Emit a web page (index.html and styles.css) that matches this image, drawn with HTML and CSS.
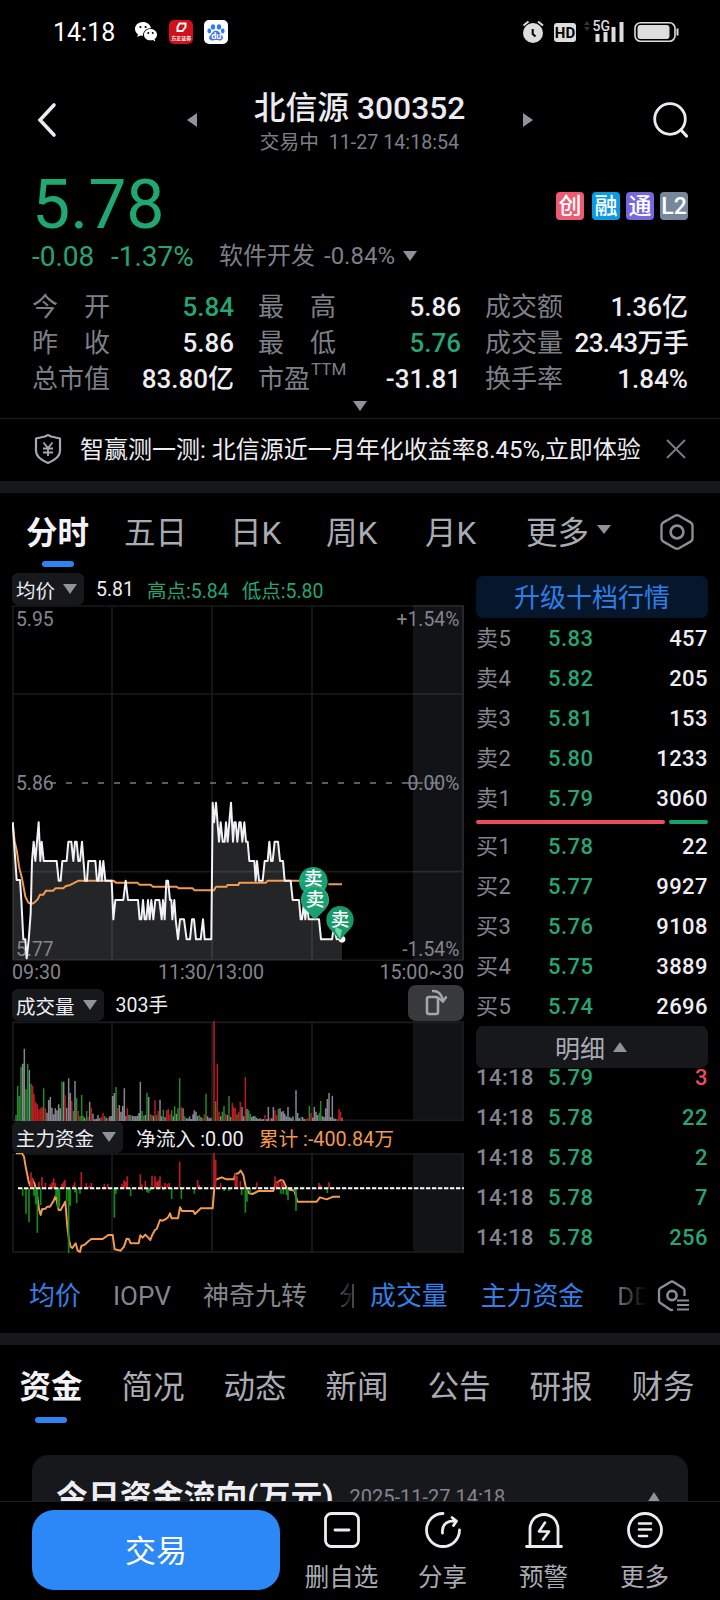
FILE: index.html
```html
<!DOCTYPE html>
<html lang="zh-CN">
<head>
<meta charset="utf-8">
<title>北信源 300352</title>
<link rel="stylesheet" href="styles.css">
</head>
<body>
<div class="phone">
  <div class="scroll">
    <div class="status">
      <span class="clock">14:18</span>
      <svg class="wechat" width="24" height="22" viewBox="0 0 24 22"><path fill="#fff" d="M9 1C4.300 1 1 4 1 8c0 2.300 1.200 4 3 5.300L3.300 16l3-1.600c.9.200 1.700.3 2.700.3 0-5 3.500-7.500 8-7.500C16.300 3.500 13 1 9 1z"/><path fill="#fff" d="M16.500 8C12.800 8 10 10.500 10 13.700s2.800 5.600 6.500 5.600c.8 0 1.500-.1 2.200-.3l2.600 1.500-.7-2.400c1.500-1 2.400-2.600 2.400-4.400C23 10.500 20.200 8 16.500 8z"/><g fill="#000"><circle cx="6.400" cy="6" r="1.100"/><circle cx="11.600" cy="6" r="1.100"/><circle cx="14.300" cy="12" r="1"/><circle cx="18.700" cy="12" r="1"/></g></svg>
      <span class="app app-red"><svg width="12" height="12" viewBox="0 0 12 12"><path d="M4.500 1.500h6v3.500l-3 4h-5V5z" fill="none" stroke="#fff" stroke-width="2"/></svg><b>方正证券</b></span>
      <span class="app app-paw"><svg width="24" height="24" viewBox="0 0 24 24"><g fill="#2f7df0"><ellipse cx="9" cy="7" rx="2.200" ry="2.800"/><ellipse cx="15" cy="7" rx="2.200" ry="2.800"/><ellipse cx="5.300" cy="11" rx="1.900" ry="2.400"/><ellipse cx="18.700" cy="11" rx="1.900" ry="2.400"/></g><path fill="#4a72ea" d="M12 10.500c2.500 0 4 3 6 5 2 2.500.5 5-2.500 5-1.500 0-2.200-.4-3.500-.4s-2 .4-3.500.4c-3 0-4.500-2.500-2.500-5 2-2 3.500-5 6-5z"/></svg><b>du</b></span>
      <span class="grow"></span>
      <svg width="160" height="34" viewBox="520 15 160 34" class="sys">
        <g fill="none" stroke="#ddd" stroke-width="2"><path d="M523.500 25.500l5-4M543 25.500l-5-4"/></g>
        <circle cx="533" cy="33" r="10" fill="#ddd"/><path d="M532.700 29v5l2.800 2.500" fill="none" stroke="#000" stroke-width="2"/>
        <rect x="554" y="23" width="22" height="19" rx="3" fill="#ddd"/><text x="565" y="38" class="hd">HD</text>
        <path d="M584 25l3-4 3 4zM584 27l3 4 3-4z" fill="#333"/>
        <text x="592.500" y="31" class="g5">5G</text>
        <g fill="#ddd"><rect x="595.500" y="34" width="4" height="8"/><rect x="603.500" y="32" width="4" height="10"/><rect x="611.500" y="27" width="4" height="15"/><rect x="619.500" y="22" width="4" height="20"/></g>
        <rect x="635" y="22.800" width="40" height="18.500" rx="5.500" fill="none" stroke="#ddd" stroke-width="1.600"/><rect x="637.500" y="25" width="32" height="14" rx="3" fill="#ddd"/><path d="M677.500 28.500v7" stroke="#ddd" stroke-width="2"/>
      </svg>
    </div>

    <div class="header">
      <svg width="22" height="36" viewBox="0 0 22 36"><path d="M18 3L4 18l14 15" fill="none" stroke="#ebebf2" stroke-width="3.600" stroke-linecap="round"/></svg>
      <svg class="prev" width="10" height="14"><path d="M10 0v14L0 7z" fill="#8f919c"/></svg>
      <div class="title"><h1>北信源 300352</h1><p>交易中&nbsp; 11-27 14:18:54</p></div>
      <svg class="next" width="10" height="14"><path d="M0 0v14l10-7z" fill="#8f919c"/></svg>
      <svg class="search" width="38" height="38" viewBox="0 0 38 38"><circle cx="18" cy="18" r="15.300" fill="none" stroke="#ebebf2" stroke-width="2.800"/><path d="M29 29l5.500 6" stroke="#ebebf2" stroke-width="3.200" stroke-linecap="round"/></svg>
    </div>

    <div class="quote">
      <div class="price">5.78</div>
      <div class="badges"><i class="b1">创</i><i class="b2">融</i><i class="b3">通</i><i class="b4">L2</i></div>
    </div>
    <div class="change"><span class="up1">-0.08</span><span class="up2">-1.37%</span><span class="sector">软件开发</span><span class="sector2">-0.84%</span><svg width="14" height="10"><path d="M0 0h14L7 10z" fill="#8f919c"/></svg></div>
    <div class="stats">
      <div><label>今<s></s>开</label><b class="g">5.84</b></div><div><label>最<s></s>高</label><b>5.86</b></div><div><label>成交额</label><b>1.36亿</b></div>
      <div><label>昨<s></s>收</label><b>5.86</b></div><div><label>最<s></s>低</label><b class="g">5.76</b></div><div><label>成交量</label><b class="fit">23.43万手</b></div>
      <div><label>总市值</label><b>83.80亿</b></div><div><label>市盈<sup>TTM</sup></label><b>-31.81</b></div><div><label>换手率</label><b>1.84%</b></div>
    </div>
    <div class="expand"><svg width="14" height="10"><path d="M0 0h14L7 10z" fill="#8f919c"/></svg></div>
    <div class="notice">
      <svg width="30" height="32" viewBox="0 0 30 32"><path d="M15 2l3 1.500 9 2V18c0 6-6 9.500-12 12C9 27.500 3 24 3 18V5.500l9-2z" fill="none" stroke="#a6a8b0" stroke-width="2.200" stroke-linejoin="round"/><path d="M10.500 9.500l4.500 5.500 4.500-5.500M15 15v8M10 15.500h10M10 19.500h10" fill="none" stroke="#a6a8b0" stroke-width="1.800"/></svg>
      <span>智赢测一测: 北信源近一月年化收益率8.45%,立即体验</span>
      <svg width="20" height="20" viewBox="0 0 20 20"><path d="M1 1l18 18M19 1L1 19" stroke="#777983" stroke-width="2"/></svg>
    </div>
    <div class="band"></div>

    <nav class="periods">
      <span class="on">分时</span><span>五日</span><span>日K</span><span>周K</span><span>月K</span><span>更多<svg width="14" height="10"><path d="M0 0h14L7 9z" fill="#8f919c"/></svg></span>
      <svg class="gear" width="36" height="38" viewBox="0 0 36 38"><path d="M16 2.800q2-1.200 4 0l11.500 6.600q2 1.200 2 3.200v12.800q0 2-2 3.200L20 35.200q-2 1.200-4 0L4.500 28.600q-2-1.200-2-3.200V12.600q0-2 2-3.200z" fill="none" stroke="#8a8c96" stroke-width="2.400"/><circle cx="18" cy="19" r="6.400" fill="none" stroke="#8a8c96" stroke-width="2.600"/></svg>
    </nav>

    <div class="market">
      <section class="charts">
        <div class="legend l1"><span class="pill">均价<svg width="14" height="10"><path d="M0 0h14L7 10z" fill="#8f919c"/></svg></span><span class="w">5.81</span><span class="g">高点:5.84</span><span class="g">低点:5.80</span></div>
        <svg class="chart" width="452" height="356" viewBox="36 1815 1356 1068">
          <rect x="1239" y="1815" width="153" height="1065" fill="#121317"/>
          <g transform="translate(0 2340)">
            <path fill="#242527" d="M38 127L42 185 46 243 50 300H60L64 360 70 478H76L80 535 86 480 92 400 96 243 101 185 106 243 111 185 116 127 121 243 125 185 131 243H170L176 302H182L187 243H200L205 185H214L220 243 225 185H230L235 243H240L246 185 255 302H261L265 243H286L291 302H296L300 243 305 302 310 243 316 302H335L340 418 346 360H370L377 302 384 360H414L419 418H424L429 360 434 418H439L444 360 449 418 454 360 460 418 466 360H478L485 418 489 360 494 418 499 302H504L510 360H514L517 418 523 360 527 418 534 478 540 418H552L560 478H570L576 418H582L588 478H602L609 418 614 478H634L638 68 642 127 648 68 657 185 662 127 668 185H674L678 127 683 185 693 68 699 185 703 127H707L712 185 718 127H722L727 185 733 127 738 185H743L748 243H763L767 302 771 243 777 302H788L794 243H803L808 185 813 243H818L824 185H834L840 243H849L854 302H872L878 360H897L902 418H906L911 375 916 418 921 365 926 418H957L963 478H996L1002 440 1010 478H1026V540H38z"/>
          </g>
          <g fill="none" stroke="#fff" stroke-opacity=".1" stroke-width="5"><path d="M39 1818H1389V2881H39zM336 1818V2881M636 1818V2881M936 1818V2881M39 2082H1389M39 2615H1389"/></g>
          <path d="M150 2349H1210" stroke="#777984" stroke-width="4.500" stroke-dasharray="18 30"/><path d="M1208 2349h60M1290 2349h30" stroke="#777984" stroke-width="4"/>
          <g class="axis"><text x="48" y="1878">5.95</text><text x="48" y="2369">5.86</text><text x="48" y="2867">5.77</text><text class="end" x="1378" y="1878">+1.54%</text><text class="end" x="1378" y="2369">0.00%</text><text class="end" x="1378" y="2867">-1.54%</text></g>
          <g transform="translate(0 2340)" fill="none" stroke-linejoin="round">
            <path stroke="#f29b50" stroke-width="6" d="M38 127L44 185 50 210 58 265 66 295 76 350 85 368 94 372 103 368 113 358 120 344H130L138 332H160L166 325H190L198 318 208 316 236 302H340L348 308H412L418 314H452L458 320H530L536 325H578L584 331H642L648 320H680L682 315H715L718 308H798L803 302H920M985 313H1026"/>
            <path stroke="#f2f2f6" stroke-width="6" d="M38 127L42 185 46 243 50 300H60L64 360 70 478H76L80 535 86 480 92 400 96 243 101 185 106 243 111 185 116 127 121 243 125 185 131 243H170L176 302H182L187 243H200L205 185H214L220 243 225 185H230L235 243H240L246 185 255 302H261L265 243H286L291 302H296L300 243 305 302 310 243 316 302H335L340 418 346 360H370L377 302 384 360H414L419 418H424L429 360 434 418H439L444 360 449 418 454 360 460 418 466 360H478L485 418 489 360 494 418 499 302H504L510 360H514L517 418 523 360 527 418 534 478 540 418H552L560 478H570L576 418H582L588 478H602L609 418 614 478H634L638 68 642 127 648 68 657 185 662 127 668 185H674L678 127 683 185 693 68 699 185 703 127H707L712 185 718 127H722L727 185 733 127 738 185H743L748 243H763L767 302 771 243 777 302H788L794 243H803L808 185 813 243H818L824 185H834L840 243H849L854 302H872L878 360H897L902 418H906L911 375 916 418 921 365 926 418H957L963 478H996L1002 440 1010 478H1026"/>
            <circle cx="1026" cy="478" r="10" fill="#fff"/>
          </g>
          <g class="pins">
            <path d="M940 2703l-34-33a43 43 0 1 1 68 0z" fill="#1aa87a" fill-opacity=".95"/><text x="940" y="2656">卖</text>
            <path d="M945 2758l-32-33a41 41 0 1 1 64 0z" fill="#17a070" stroke="#55c99b" stroke-width="2"/><text x="945" y="2719">卖</text>
            <path d="M1020 2820l-32-35a41 41 0 1 1 64 0z" fill="#17996a"/><path d="M1020 2816l-14-22v-14l20 10z" fill="#6bd6a6"/><text x="1020" y="2778">卖</text>
          </g>
        </svg>
        <div class="times"><span>09:30</span><span class="mid">11:30/13:00</span><span>15:00~30</span></div>
        <div class="legend l2"><span class="pill">成交量<svg width="14" height="10"><path d="M0 0h14L7 10z" fill="#8f919c"/></svg></span><span class="w">303手</span>
          <span class="rotate"><svg width="26" height="30" viewBox="0 0 26 30"><rect x="4" y="9" width="11" height="17" rx="2" fill="none" stroke="#a5a6ab" stroke-width="2.600"/><path d="M9 3c6-.5 9.500 3 11 9M15.500 10l4.500 3.500 3.500-5" fill="none" stroke="#a5a6ab" stroke-width="2.400"/></svg></span></div>
        <svg class="chart" width="452" height="100" viewBox="36 122 1356 300">
          <rect x="1239" y="122" width="153" height="300" fill="#121317"/>
          <path fill="none" stroke="#1b1c1f" stroke-width="5" d="M39 126H1389V420H39zM336 126V420M636 126V420M936 126V420"/>
          <g fill="none" stroke-width="4.500">
            <path stroke="#85868f" d="M68 422v-172M73 422v-217M88 422v-153M141 422v-25M146 422v-63M151 422v-72M156 422v-40M161 422v-20M166 422v-38M171 422v-32M176 422v-50M181 422v-38M191 422v-118M200 422v-40M206 422v-128M211 422v-84M225 422v-120M254 422v-10M269 422v-58M279 422v-22M284 422v-5M289 422v-7M294 422v-18M299 422v-8M319 422v-10M329 422v-14M334 422v-15M338 422v-75M343 422v-84M358 422v-48M363 422v-28M368 422v-45M373 422v-98M378 422v-15M387 422v-18M397 422v-16M402 422v-15M407 422v-14M412 422v-16M417 422v-24M421 422v-118M436 422v-18M446 422v-72M461 422v-15M480 422v-64M485 422v-14M495 422v-12M520 422v-14M529 422v-22M549 422v-38M559 422v-8M564 422v-8M569 422v-14M574 422v-6M579 422v-20M583 422v-32M588 422v-28M593 422v-15M603 422v-12M623 422v-14M628 422v-8M633 422v-10M662 422v-14M682 422v-18M692 422v-12M726 422v-42M731 422v-14M741 422v-36M755 422v-12M760 422v-15M765 422v-14M770 422v-10M775 422v-6M780 422v-8M785 422v-5M790 422v-6M800 422v-6M805 422v-42M815 422v-8M820 422v-42M840 422v-38M845 422v-28M850 422v-30M854 422v-22M859 422v-14M864 422v-42M869 422v-12M874 422v-8M879 422v-14M888 422v-92M893 422v-24M898 422v-8M908 422v-12M913 422v-6M938 422v-10M943 422v-42M948 422v-28M953 422v-18M967 422v-15M972 422v-12M977 422v-38M982 422v-66M987 422v-84M992 422v-12M997 422v-76M1002 422v-8M1007 422v-6M1026 422v-10"/>
            <path stroke="#25882a" d="M48 422v-18M53 422v-105M58 422v-75M63 422v-162M78 422v-95M83 422v-172M93 422v-112M131 422v-98M186 422v-118M220 422v-30M230 422v-68M240 422v-15M245 422v-78M250 422v-15M260 422v-30M314 422v-15M348 422v-102M392 422v-18M426 422v-30M431 422v-16M441 422v-85M456 422v-18M470 422v-18M490 422v-34M515 422v-32M524 422v-44M534 422v-38M539 422v-128M554 422v-14M598 422v-18M608 422v-8M618 422v-82M647 422v-60M667 422v-28M672 422v-45M687 422v-75M711 422v-20M746 422v-32M751 422v-22M835 422v-36M903 422v-12M928 422v-46M958 422v-25M962 422v-60"/>
            <path stroke="#bd1b22" d="M98 422v-106M102 422v-82M107 422v-57M112 422v-50M117 422v-35M122 422v-38M127 422v-42M136 422v-38M195 422v-77M215 422v-60M235 422v-30M264 422v-12M274 422v-40M304 422v-12M309 422v-24M324 422v-10M353 422v-40M382 422v-38M451 422v-20M465 422v-62M475 422v-30M500 422v-32M505 422v-36M510 422v-20M544 422v-42M613 422v-20M642 422v-300M652 422v-172M657 422v-28M677 422v-22M697 422v-54M701 422v-42M706 422v-38M716 422v-28M721 422v-58M736 422v-132M795 422v-18M810 422v-8M825 422v-32M830 422v-18M918 422v-6M923 422v-8M933 422v-24M1012 422v-6M1017 422v-36M1022 422v-28"/>
          </g>
        </svg>
        <div class="legend l3"><span class="pill">主力资金<svg width="14" height="10"><path d="M0 0h14L7 10z" fill="#8f919c"/></svg></span><span class="w">净流入 :0.00</span><span class="o">累计 :-400.84万</span></div>
        <svg class="chart" width="452" height="100" viewBox="36 519 1356 300">
          <rect x="1239" y="519" width="153" height="300" fill="#121317"/>
          <path fill="none" stroke="#1b1c1f" stroke-width="5" d="M39 522H1389V816H39zM336 522V816M636 522V816M936 522V816"/>
          <path fill="none" stroke="#f29b50" stroke-width="6" stroke-linejoin="round" d="M48 520H66L72 530 77 560 86 605 92 620 97 598 104 612 112 650 117 688 122 705 126 688 136 686 142 680H150L160 664 167 648 176 690H182L196 665 202 740 207 780 212 800 217 804 227 790 233 812 240 816 244 798 254 794 266 783 274 777H308L325 765H338L344 808 362 812 372 800 380 776 387 778 392 790H416L421 766 428 773 436 764 444 772 451 780 457 764 465 750 470 747 480 720 488 722 498 717 504 712 510 700 515 715H534L540 682 546 693H580L585 702 602 685H638L645 600 665 592 680 598H702L706 582 715 580 722 572 730 585 738 625 748 640 758 642 775 633H820L827 610 843 600 850 603 862 628 884 632 888 650 892 665H950L960 652 980 658 1000 650H1020"/>
          <g fill="none" stroke-width="5">
            <path stroke="#bd1b22" d="M93 625v-48M98 625v-28M117 625v-18M126 625v-34M136 625v-16M151 625v-12M156 625v-18M161 625v-30M166 625v-16M185 625v-14M190 625v-20M195 625v-25M220 625v-10M224 625v-18M244 625v-49M259 625v-16M268 625v-8M274 625v-16M313 625v-14M323 625v-14M366 625v-14M372 625v-24M377 625v-20M382 625v-36M421 625v-42M426 625v-12M436 625v-22M456 625v-38M465 625v-36M470 625v-20M475 625v-24M480 625v-36M486 625v-8M495 625v-16M502 625v-12M508 625v-16M539 625v-79M593 625v-25M598 625v-10M642 625v-106M647 625v-85M662 625v-16M706 625v-45M711 625v-38M721 625v-22M770 625v-18M825 625v-36M830 625v-18M836 625v-22M845 625v-24M850 625v-14M957 625v-16M962 625v-10M987 625v-18"/>
            <path stroke="#118a19" d="M68 625v22M78 625v76M87 625v102M102 625v22M107 625v48M112 625v133M122 625v50M168 625v26M173 625v60M178 625v56M200 625v38M206 625v194M211 625v52M225 625v12M230 625v45M240 625v16M343 625v88M348 625v16M392 625v24M427 625v6M441 625v12M446 625v14M451 625v8M490 625v6M515 625v32M544 625v32M583 625v16M673 625v8M687 625v8M725 625v20M736 625v73M741 625v40M750 625v14M843 625v16M850 625v18M859 625v20M864 625v36M884 625v10M888 625v68M982 625v14"/>
          </g>
          <path d="M54 625H1392" stroke="#fff" stroke-width="6" stroke-dasharray="13 5"/>
        </svg>
      </section>

      <section class="book">
        <div class="upgrade">升级十档行情</div>
        <div class="row"><span>卖5</span><i>5.83</i><b>457</b></div><div class="row"><span>卖4</span><i>5.82</i><b>205</b></div><div class="row"><span>卖3</span><i>5.81</i><b>153</b></div><div class="row"><span>卖2</span><i>5.80</i><b>1233</b></div><div class="row"><span>卖1</span><i>5.79</i><b>3060</b></div>
        <div class="ratio"><u></u><u></u></div>
        <div class="row"><span>买1</span><i>5.78</i><b>22</b></div><div class="row"><span>买2</span><i>5.77</i><b>9927</b></div><div class="row"><span>买3</span><i>5.76</i><b>9108</b></div><div class="row"><span>买4</span><i>5.75</i><b>3889</b></div><div class="row"><span>买5</span><i>5.74</i><b>2696</b></div>
        <div class="detail">明细<svg width="14" height="10"><path d="M0 10h14L7 0z" fill="#8f919c"/></svg></div>
        <div class="ticks">
          <div class="row"><span>14:18</span><i>5.79</i><b class="r">3</b></div><div class="row"><span>14:18</span><i>5.78</i><b>22</b></div><div class="row"><span>14:18</span><i>5.78</i><b>2</b></div><div class="row"><span>14:18</span><i>5.78</i><b>7</b></div><div class="row"><span>14:18</span><i>5.78</i><b>256</b></div>
        </div>
      </section>
    </div>

    <div class="indicators">
      <div class="set set1"><span class="on">均价</span><span>IOPV</span><span>神奇九转</span><span class="cut">分</span></div>
      <div class="divider"></div>
      <div class="set set2"><span class="on">成交量</span><span class="on">主力资金</span><span class="cut2">DDX</span></div>
      <svg width="34" height="34" viewBox="0 0 34 34"><path d="M28.500 17v-5.500q0-1.600-1.400-2.500L17.500 3q-1.500-1-3 0L4.400 9Q3 10 3 11.500v10Q3 23 4.400 24l9.600 6.500q1.500 1 3 0" fill="none" stroke="#8a8c96" stroke-width="2.300"/><circle cx="16" cy="16.500" r="4.600" fill="none" stroke="#8a8c96" stroke-width="2.600"/><path d="M21 21.500h12M21 26h12M21 30.500h12" stroke="#8a8c96" stroke-width="2"/></svg>
    </div>
    <div class="band"></div>
    <nav class="sections"><span class="on">资金</span><span>简况</span><span>动态</span><span>新闻</span><span>公告</span><span>研报</span><span>财务</span></nav>
    <div class="card"><h2>今日资金流向(万元)</h2><time>2025-11-27 14:18</time><svg width="14" height="11"><path d="M0 11h14L7 0z" fill="#8f919c"/></svg></div>
  </div>

  <footer class="actions">
    <div class="trade">交易</div>
    <div class="act"><svg width="38" height="38" viewBox="0 0 38 38"><rect x="2.500" y="2.500" width="33" height="33" rx="6" fill="none" stroke="#ebebf2" stroke-width="2.800"/><path d="M12 19h14" stroke="#ebebf2" stroke-width="2.800" stroke-linecap="round"/></svg>删自选</div>
    <div class="act"><svg width="38" height="38" viewBox="0 0 38 38"><path d="M19 2.500A16.500 16.500 0 1 0 35.500 19M18.500 22c-1-8 4-12.500 13.500-12M28 6.500l4.500 3.500-3 4.500" fill="none" stroke="#ebebf2" stroke-width="2.800" stroke-linecap="round" stroke-linejoin="round"/></svg>分享</div>
    <div class="act"><svg width="38" height="38" viewBox="0 0 38 38"><path d="M5 34V17.500a14 14 0 0 1 28 0V34M1.500 35.500h35" fill="none" stroke="#ebebf2" stroke-width="2.800" stroke-linecap="round"/><path d="M20 11.500l-6 9h10l-6 8" fill="none" stroke="#ebebf2" stroke-width="2.600" stroke-linejoin="round" stroke-linecap="round"/></svg>预警</div>
    <div class="act"><svg width="38" height="38" viewBox="0 0 38 38"><circle cx="19" cy="19" r="16.500" fill="none" stroke="#ebebf2" stroke-width="2.800"/><path d="M13 12.500h12M13 18.500h12M13 25h8" stroke="#ebebf2" stroke-width="2.600" stroke-linecap="round"/></svg>更多</div>
  </footer>
</div>
</body>
</html>
```
FILE: styles.css
```css
* { box-sizing: border-box; }
body { margin: 0; background: #000; color: #ededf3; font-family: Roboto, "Noto Sans CJK SC", sans-serif; }
h1, h2, p { margin: 0; }
i, s { font-style: normal; text-decoration: none; }
svg { display: block; flex: none; }
.g { color: #26a572; }
.o { color: #f29b50; }
.phone { width: 720px; height: 1600px; overflow: hidden; display: flex; flex-direction: column; }
.scroll { height: 1501px; overflow: hidden; }

.status { height: 64px; display: flex; align-items: center; padding: 0 40px 0 53px; }
.clock { font-size: 25px; color: #fff; padding-top: 1px; }
.wechat { margin-left: 19px; }
.app { width: 24px; height: 24px; border-radius: 5px; margin-left: 11px; text-align: center; color: #fff; position: relative; overflow: hidden; }
.app-red { background: #d0111b; display: flex; flex-direction: column; align-items: center; padding-top: 2px; }
.app-red b { font-size: 5px; line-height: 8px; white-space: nowrap; }
.app-paw { background: #fff; }
.app-paw b { position: absolute; left: 0; right: 0; top: 10px; font-size: 9px; line-height: 12px; }
.grow { flex: 1; }
.hd { font-size: 15px; font-weight: 700; text-anchor: middle; fill: #000; }
.g5 { font-size: 14px; font-weight: 500; fill: #ddd; }

.header { height: 106px; display: flex; align-items: center; padding: 6px 30px 0 36px; }
.prev { margin-left: 129px; }
.title { width: 328px; text-align: center; }
.title h1 { font-size: 31.800px; font-weight: 500; line-height: 40px; padding-top: 8px; color: #ebebf2; }
.title p { font-size: 19.700px; line-height: 30px; color: #7d7f88; padding-bottom: 3px; }
.next { margin-left: 1px; }
.search { margin-left: 119px; }

.quote { height: 66px; display: flex; justify-content: space-between; padding: 0 32px 0 32px; }
.price { font-size: 68px; line-height: 70px; height: 66px; color: #1fa970; }
.badges { display: flex; gap: 6px; padding-top: 22px; }
.badges i { width: 28px; height: 28px; border-radius: 4px; color: #fff; font-size: 23px; font-weight: 500; line-height: 29px; text-align: center; }
.b1 { background: #ed5a73; margin-right: 2px; }
.b2 { background: #0a9be3; }
.b3 { background: #7667df; }
.b4 { background: #77879c; }
.change { height: 40px; display: flex; align-items: center; color: #7d7f88; font-size: 24px; line-height: 40px; padding-left: 32px; }
.up1, .up2 { font-size: 28px; line-height: 38px; color: #26a572; padding-top: 2px; }
.up1 { width: 79px; }
.up2 { width: 108px; }
.sector2 { margin: 0 8px 0 9px; }
.stats { display: grid; grid-template-columns: 202px 201px 203px; column-gap: 25px; grid-auto-rows: 36px; padding: 13px 31px 1px 32px; font-size: 26px; line-height: 36px; }
.stats div { display: flex; justify-content: space-between; white-space: nowrap; }
.stats div:nth-child(3n+2) { margin-right: -1px; margin-left: -1px; }
.stats label { color: #7d7f88; }
.stats s { display: inline-block; width: 26px; }
.stats b { font-weight: 500; }
.stats .fit { letter-spacing: -.7px; }
.stats sup { font-size: 17px; line-height: 0; vertical-align: 13px; margin-left: 1px; }
.expand { height: 20px; display: flex; justify-content: center; padding-top: 3px; }
.notice { height: 63px; border-top: 1px solid #1b1c1f; display: flex; align-items: center; padding: 0 34px 3px 33px; font-size: 24px; }
.notice span { flex: 1; margin: -2px 0 0 17px; white-space: nowrap; }
.band { height: 12px; background: #17181c; }

.periods { height: 79px; display: flex; align-items: center; padding: 0 0 1px 26px; font-size: 31.500px; color: #a9abb4; }
.periods span { display: flex; align-items: center; height: 71px; margin-bottom: 5px; white-space: nowrap; }
.periods span:nth-child(1) { width: 98px; }
.periods span:nth-child(2) { width: 106px; }
.periods span:nth-child(3) { width: 96px; }
.periods span:nth-child(4) { width: 99px; }
.periods span:nth-child(5) { width: 101px; }
.periods span:nth-child(6) { width: 133px; gap: 8px; }
.periods .on, .sections .on { color: #f2f2f7; font-weight: 700; position: relative; }
.on::after { display: none; content: ""; position: absolute; height: 6px; width: 32px; border-radius: 3px; background: #2e83f2; }
.periods .on::after { display: block; left: 16px; bottom: -2px; }

.market { display: flex; gap: 12px; padding-left: 12px; height: 681px; }
.charts { width: 452px; display: flex; flex-direction: column; }
.legend { display: flex; align-items: center; font-size: 19.5px; white-space: nowrap; height: 32px; }
.l1 { margin-top: 1px; }
.pill { background: #17181c; height: 32px; border-radius: 6px; display: flex; align-items: center; gap: 8px; padding: 0 7px 0 4px; margin-right: 12px; }
.legend .g { margin-left: 13px; }
.legend .o { margin-left: 15px; }
.l3 .w, .l3 .o { font-size: 19.800px; }
.l3 .pill { margin-right: 13px; }
.axis { font-size: 58px; fill: #83858f; }
.end { text-anchor: end; }
.pins text { font-size: 56px; font-weight: 500; text-anchor: middle; fill: #fff; }
.times { display: grid; grid-template-columns: 1fr auto 1fr; font-size: 19.700px; line-height: 23px; height: 24px; color: #83858f; }
.times span:last-child { text-align: right; }
.times .mid { padding-right: 54px; }
.l2 { height: 36px; align-items: flex-end; }
.l2 .w { line-height: 30px; }
.rotate { margin-left: auto; width: 56px; height: 36px; border-radius: 8px; background: #38393d; display: flex; align-items: center; justify-content: center; }

.book { width: 232px; padding-top: 4px; }
.upgrade { height: 42px; border-radius: 7px; background: #07172b; color: #2f7de6; font-size: 26px; line-height: 44px; text-align: center; }
.row { height: 40px; line-height: 41px; display: grid; grid-template-columns: 72px 1fr auto; font-size: 22px; letter-spacing: .45px; color: #83858f; }
.row i { color: #26a572; font-weight: 500; }
.row b { color: #ededf3; font-weight: 500; }
.ratio { height: 8px; display: flex; gap: 4px; padding-top: 2px; }
.ratio u { height: 4px; border-radius: 2px; background: #ee4b60; width: 189px; }
.ratio u:last-child { background: #16a46c; width: 39px; }
.detail { height: 42px; border-radius: 7px; background: #17181c; color: #a9abb4; font-size: 25px; display: flex; align-items: center; justify-content: center; gap: 8px; position: relative; padding-right: 2px; }
.ticks { margin-top: -11px; }
.ticks .row span { font-weight: 500; }
.ticks .row b { color: #26a572; }
.ticks .row .r { color: #ee4b60; }

.indicators { height: 80px; display: flex; align-items: center; font-size: 26px; color: #83858f; white-space: nowrap; padding: 6px 0 0 29px; }
.indicators .on { color: #3580e8; }
.set { display: flex; flex: none; overflow: hidden; line-height: 40px; height: 40px; }
.set1 { width: 323px; gap: 32px; }
.divider { width: 2px; height: 24px; background: #44454b; flex: none; }
.set2 { width: 293px; padding-left: 16px; gap: 33px; margin-right: 9px; font-size: 25.900px; }
.cut { background: linear-gradient(90deg, #55565c, #000 18px); -webkit-background-clip: text; background-clip: text; color: transparent; }
.cut2 { background: linear-gradient(90deg, #777983, #000 30px); -webkit-background-clip: text; background-clip: text; color: transparent; }

.sections { height: 86px; display: flex; font-size: 31.500px; line-height: 85px; color: #a9abb4; padding-left: 19.500px; overflow: hidden; }
.sections span { flex: none; width: 102px; }
.sections .on::after { display: block; left: 15px; top: 72px; }
.card { margin: 24px 32px 0; height: 120px; border-radius: 16px; background: #17181c; display: flex; padding: 22px 27px 0 24px; white-space: nowrap; }
.card h2 { font-size: 31.900px; line-height: 41px; font-weight: 700; }
.card time { font-size: 20px; color: #83858f; line-height: 41px; margin-left: 16px; }
.card svg { margin: 15px 0 0 auto; }

.actions { height: 99px; border-top: 1px solid #1d1e21; display: flex; padding: 8px 0 0 32px; }
.trade { width: 248px; height: 80px; border-radius: 22px; background: #2c87f7; color: #fff; font-size: 31px; line-height: 84px; text-align: center; margin-right: 11px; }
.act { width: 101px; display: flex; flex-direction: column; align-items: center; font-size: 24.500px; line-height: 28px; color: #a9abb4; padding-top: 1px; gap: 15px; }
```
